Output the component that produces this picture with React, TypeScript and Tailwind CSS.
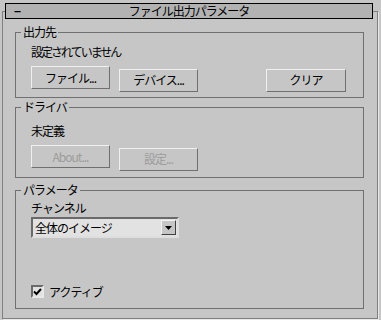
import React from 'react';

const font = { fontFamily: '"Noto Sans CJK JP", "Liberation Sans", sans-serif' };

function Btn({ label, disabled = false, w = 'w-[79px]' }: { label: string; disabled?: boolean; w?: string }) {
  return (
    <button
      className={`${w} h-[23px] border border-t-[#f0f0f0] border-l-[#f0f0f0] border-r-[#707070] border-b-[#707070] bg-[#c6c6c6] text-[12px] leading-none tracking-[-1px] ${
        disabled ? 'text-[#9c9c9c]' : 'text-black'
      }`}
    >
      {label}
    </button>
  );
}

function Group({ title, h, children }: { title: string; h: string; children: React.ReactNode }) {
  return (
    <div className={`relative ml-[12px] w-[349px] ${h} border border-[#707070] pl-[15px]`}>
      <span className="absolute -top-[9px] left-[5px] bg-[#c6c6c6] px-[2px] text-[12px] leading-[16px] tracking-[-1px] text-black">
        {title}
      </span>
      {children}
    </div>
  );
}

export default function App() {
  return (
    <div className="w-[381px] h-[320px] bg-[#c6c6c6] overflow-hidden pt-[11px]" style={font}>
      <div className="ml-[2px] w-[376px] h-[308px] border border-[#808080] shadow-[1px_1px_0_#e8e8e8]">
        <div className="-mt-[9px] ml-[2px] w-[368px] h-[16px] border border-black bg-[#b2b2b2] flex items-center text-[12px] leading-none text-black">
          <span className="w-[20px] pl-[8px] font-bold">−</span>
          <span className="flex-1 text-center tracking-[-1px] pr-[20px]">ファイル出力パラメータ</span>
        </div>

        <div className="mt-[13px]">
          <Group title="出力先" h="h-[66px]">
            <div className="pt-[12px] text-[12px] leading-[14px] tracking-[-2px] text-black">設定されていません</div>
            <div className="mt-[7px] flex">
              <Btn label="ファイル..." />
              <div className="ml-[9px]">
                <Btn label="デバイス..." />
              </div>
              <div className="ml-[68px]">
                <Btn label="クリア" w="w-[80px]" />
              </div>
            </div>
          </Group>
        </div>

        <div className="mt-[9px]">
          <Group title="ドライバ" h="h-[71px]">
            <div className="pt-[16px] text-[12px] leading-[14px] tracking-[-1px] text-black">未定義</div>
            <div className="mt-[7px] flex">
              <Btn label="About..." disabled />
              <div className="ml-[9px]">
                <Btn label="設定..." disabled />
              </div>
            </div>
          </Group>
        </div>

        <div className="mt-[12px]">
          <Group title="パラメータ" h="h-[119px]">
            <div className="pt-[10px] text-[12px] leading-[14px] tracking-[-1px] text-black">チャンネル</div>
            <div className="mt-[2px] w-[148px] h-[21px] border-2 border-t-[#6a6a6a] border-l-[#6a6a6a] border-r-[#dedede] border-b-[#dedede] bg-[#e2e2e2] flex items-center justify-between">
              <span className="pl-[2px] text-[12px] leading-none tracking-[-1px] text-black">全体のイメージ</span>
              <div className="mr-[1px] w-[15px] h-[15px] border border-t-[#f4f4f4] border-l-[#f4f4f4] border-r-[#404040] border-b-[#404040] bg-[#c6c6c6] flex items-center justify-center">
                <svg width="7" height="4" viewBox="0 0 7 4">
                  <path d="M0 0h7L3.5 4z" fill="#000" />
                </svg>
              </div>
            </div>
            <div className="mt-[47px] flex items-center">
              <div className="w-[13px] h-[13px] border-2 border-t-[#6a6a6a] border-l-[#6a6a6a] border-r-[#e8e8e8] border-b-[#e8e8e8] bg-[#e2e2e2] flex items-center justify-center">
                <svg width="9" height="8" viewBox="0 0 9 8">
                  <path d="M1 3.5l2.5 2.5 4.5-5" stroke="#000" strokeWidth="2" fill="none" />
                </svg>
              </div>
              <span className="ml-[5px] text-[12px] leading-none tracking-[-1px] text-black">アクティブ</span>
            </div>
          </Group>
        </div>
      </div>
    </div>
  );
}
